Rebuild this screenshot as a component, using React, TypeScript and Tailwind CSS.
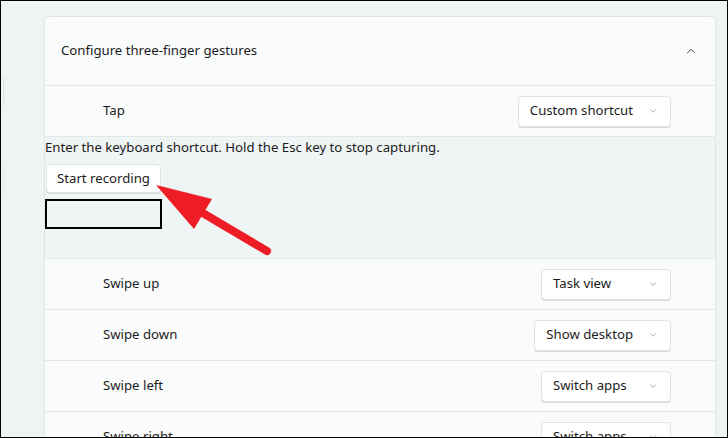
import { ChevronDown, ChevronUp } from 'lucide-react';

const rows = [
  { label: 'Swipe up', value: 'Task view' },
  { label: 'Swipe down', value: 'Show desktop' },
  { label: 'Swipe left', value: 'Switch apps' },
  { label: 'Swipe right', value: 'Switch apps' },
];

function Dropdown({ value }: { value: string }) {
  return (
    <div className="h-[31px] min-w-[130px] flex items-center justify-between gap-[15px] pl-[11px] pr-[12px] bg-white border border-[#e3e5e5] rounded-[4px] shadow-[0_1px_0_#d8dada]">
      <span>{value}</span>
      <ChevronDown className="w-[10px] h-[10px] text-[#6b6b6b]" strokeWidth={1.4} />
    </div>
  );
}

function GestureRow({ label, value }: { label: string; value: string }) {
  return (
    <div className="h-[51px] shrink-0 flex items-center justify-between pl-[58px] pr-[44px] border-t border-[#e3e7e7] bg-[#fafbfb]">
      <span>{label}</span>
      <Dropdown value={value} />
    </div>
  );
}

export default function App() {
  return (
    <div
      className="relative w-[728px] h-[438px] overflow-hidden border border-black bg-[#eef3f3] text-[13.2px] text-[#1b1b1b] flex"
      style={{ fontFamily: '"Noto Sans", "Liberation Sans", sans-serif' }}
    >
      {/* sidebar edge, cut off */}
      <div className="w-[43px] shrink-0 flex flex-col">
        <div className="mt-[76px] w-[3px] h-[28px] border-r border-y border-[#d9dddd] rounded-r-[3px] bg-[#f7f9f9]" />
        <div className="mt-[62px] w-[3px] h-[30px] border-r border-[#e3e7e7]" />
      </div>

      <div className="mt-[15px] w-[672px] flex flex-col border-x border-t border-[#e1e5e5] rounded-t-[5px] overflow-hidden">
        <div className="h-[68px] shrink-0 flex items-center justify-between pl-[16px] pr-[17px] bg-[#fafbfb]">
          <span>Configure three-finger gestures</span>
          <ChevronUp className="w-[14px] h-[14px] text-[#333]" strokeWidth={1.5} />
        </div>

        <GestureRow label="Tap" value="Custom shortcut" />

        <div className="h-[122px] shrink-0 flex flex-col items-start border-t border-[#e3e7e7] bg-[#eff4f4]">
          <p className="leading-[20px]">Enter the keyboard shortcut. Hold the Esc key to stop capturing.</p>
          <button className="mt-[7px] ml-px h-[29px] px-[10px] bg-white border border-[#e3e5e5] rounded-[4px] shadow-[0_1px_0_#d8dada]">
            Start recording
          </button>
          <div className="mt-[6px] w-[117px] h-[30px] border-2 border-black" />
        </div>

        {rows.map((r) => (
          <GestureRow key={r.label} label={r.label} value={r.value} />
        ))}
      </div>

      <svg className="absolute left-0 top-0 pointer-events-none" width="728" height="438">
        <line x1="266" y1="250" x2="200" y2="211" stroke="#ee1c24" strokeWidth="8" strokeLinecap="round" />
        <polygon points="155,184 211,198 193,228" fill="#ee1c24" />
      </svg>
    </div>
  );
}
